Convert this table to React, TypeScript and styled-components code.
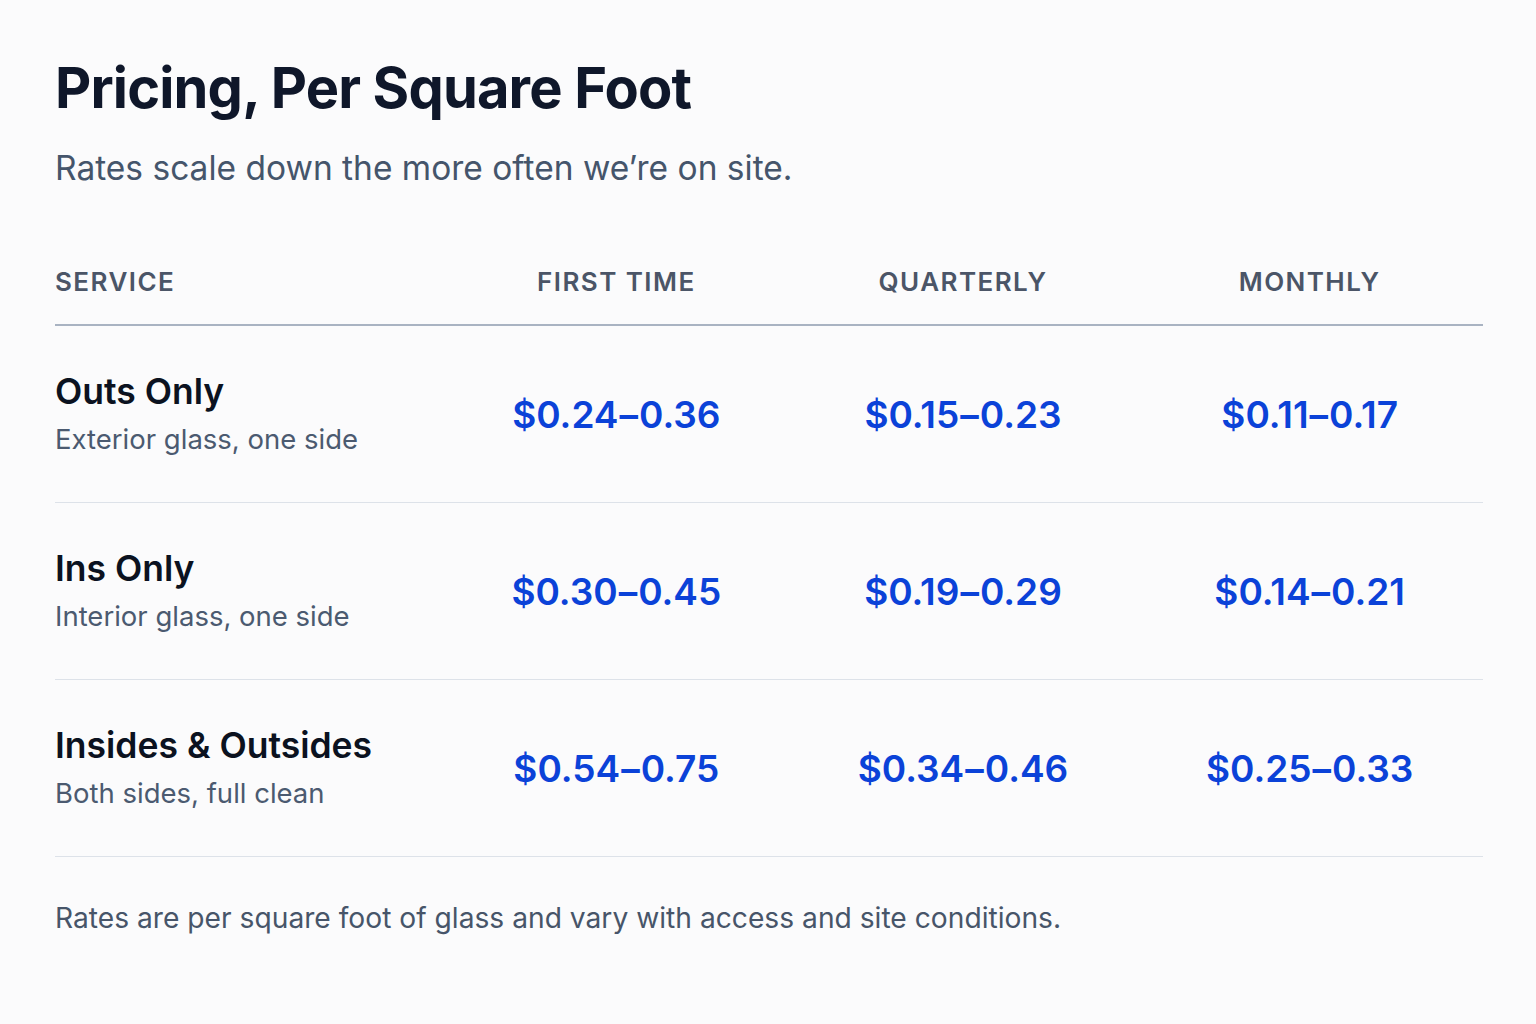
import React from "react";
import styled, { createGlobalStyle } from "styled-components";

const Global = createGlobalStyle`
  html, body { margin: 0; padding: 0; background: #fbfbfc; }
  body { font-family: Inter, "Noto Sans", sans-serif; -webkit-font-smoothing: antialiased; }
`;

const Page = styled.main`
  width: 1536px;
  min-height: 1024px;
  box-sizing: border-box;
  padding: 54px 53px 0 55px;
  background: #fbfbfc;
`;

const Title = styled.h1`
  margin: 0;
  font-size: 56px;
  line-height: 68px;
  font-weight: 700;
  letter-spacing: -0.015em;
  color: #0f172a;
`;

const Subtitle = styled.p`
  margin: 25px 0 0;
  font-size: 33.5px;
  line-height: 42px;
  font-weight: 400;
  color: #45556b;
`;

const Table = styled.div`
  margin-top: 76px;
  display: grid;
  grid-template-columns: 388px repeat(3, 1fr);
`;

const HeaderRow = styled.div`
  display: contents;
`;

const HeadCell = styled.div<{ $align: "left" | "center" }>`
  padding-bottom: 25px;
  border-bottom: 2px solid #a9b3c2;
  text-align: ${(p) => p.$align};
  font-size: 26px;
  line-height: 34px;
  font-weight: 600;
  letter-spacing: 0.055em;
  color: #4b5567;
`;

const Row = styled.div`
  display: contents;
`;

const Cell = styled.div`
  height: 176px;
  display: flex;
  flex-direction: column;
  justify-content: center;
  border-bottom: 1px solid #dde2e9;
`;

const PriceCell = styled(Cell)`
  align-items: center;
`;

const Name = styled.div`
  font-size: 35.5px;
  line-height: 40px;
  font-weight: 600;
  color: #0b1220;
`;

const Desc = styled.div`
  margin-top: 10px;
  font-size: 27.5px;
  line-height: 34px;
  font-weight: 400;
  color: #4b5a70;
`;

const Price = styled.div`
  font-size: 37px;
  line-height: 44px;
  font-weight: 600;
  color: #0b42d8;
  padding-top: 2px;
`;

const Dash = styled.span`
  margin: 0 1px;
`;

const Footer = styled.p`
  margin: 44px 0 0;
  font-size: 28.2px;
  line-height: 34px;
  font-weight: 400;
  color: #475569;
`;

const rows = [
  { name: "Outs Only", desc: "Exterior glass, one side", prices: [["0.24", "0.36"], ["0.15", "0.23"], ["0.11", "0.17"]] },
  { name: "Ins Only", desc: "Interior glass, one side", prices: [["0.30", "0.45"], ["0.19", "0.29"], ["0.14", "0.21"]] },
  { name: "Insides & Outsides", desc: "Both sides, full clean", prices: [["0.54", "0.75"], ["0.34", "0.46"], ["0.25", "0.33"]] },
];

export default function App() {
  return (
    <>
      <Global />
      <Page>
        <Title>Pricing, Per Square Foot</Title>
        <Subtitle>Rates scale down the more often we’re on site.</Subtitle>
        <Table>
          <HeaderRow>
            <HeadCell $align="left">SERVICE</HeadCell>
            <HeadCell $align="center">FIRST TIME</HeadCell>
            <HeadCell $align="center">QUARTERLY</HeadCell>
            <HeadCell $align="center">MONTHLY</HeadCell>
          </HeaderRow>
          {rows.map((r) => (
            <Row key={r.name}>
              <Cell>
                <Name>{r.name}</Name>
                <Desc>{r.desc}</Desc>
              </Cell>
              {r.prices.map(([lo, hi]) => (
                <PriceCell key={lo + hi}>
                  <Price>
                    ${lo}
                    <Dash>–</Dash>
                    {hi}
                  </Price>
                </PriceCell>
              ))}
            </Row>
          ))}
        </Table>
        <Footer>Rates are per square foot of glass and vary with access and site conditions.</Footer>
      </Page>
    </>
  );
}
